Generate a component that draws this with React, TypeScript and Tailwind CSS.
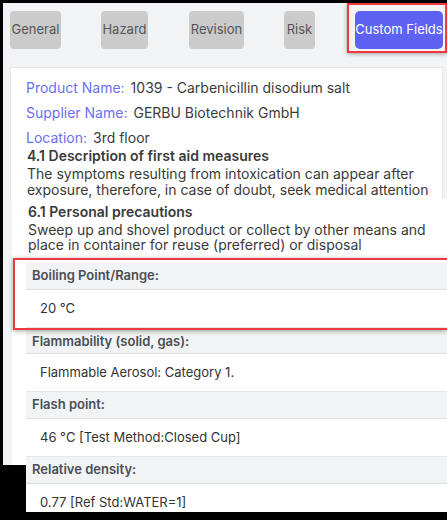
import React from "react";

const Tab = ({ label, className = "" }: { label: string; className?: string }) => (
  <div
    className={`h-[38px] rounded-[4px] bg-[#cbcbcb] flex items-center justify-center text-[13px] text-[#555] ${className}`}
  >
    {label}
  </div>
);

const HeaderRow = ({ label, h = "h-[27px]" }: { label: string; h?: string }) => (
  <div className={`${h} bg-[#f1f3f5] border-b border-[#dcdfe2] flex items-center pl-[6px] text-[13px] font-semibold text-[#4a4f55]`}>
    {label}
  </div>
);

const ValueRow = ({ value, h = "h-[38px]" }: { value: string; h?: string }) => (
  <div className={`${h} bg-white border-b border-[#e4e6e8] flex items-center pl-[14px] text-[13px] text-[#333]`}>
    {value}
  </div>
);

export default function App() {
  return (
    <div className="w-[447px] h-[520px] bg-black overflow-hidden pt-[3px] pl-[3px] font-['Inter',sans-serif]">
      <div className="bg-[#f1f3f5]">
        {/* Tabs */}
        <div className="flex items-start h-[64px]">
          <Tab label="General" className="mt-[8px] ml-[7px] w-[51px]" />
          <Tab label="Hazard" className="mt-[8px] ml-[40px] w-[47px]" />
          <Tab label="Revision" className="mt-[8px] ml-[41px] w-[55px]" />
          <Tab label="Risk" className="mt-[8px] ml-[40px] w-[31px]" />
          <div className="ml-[32px] border-2 border-[#ee3a3f] pt-[6px] pl-[6px] pr-[2px] pb-[2px] shadow-[0_1px_4px_rgba(0,0,0,0.35)]">
            <div className="h-[38px] w-[88px] rounded-[5px] bg-[#5d62f5] flex items-center justify-center text-[13px] text-white">
              Custom Fields
            </div>
          </div>
        </div>

        {/* Card */}
        <div className="ml-[7px] mr-[4px] bg-white border border-b-0 border-[#e3e5e8] pl-[15px] pt-[10px] pb-[1px]">
          <div className="flex flex-col gap-[5px] text-[14px] leading-[20px]">
            <div className="flex gap-[6px]">
              <span className="text-[#6b6ff2]">Product Name:</span>
              <span className="text-[#3c3c3c]">1039 - Carbenicillin disodium salt</span>
            </div>
            <div className="flex gap-[6px]">
              <span className="text-[#6b6ff2]">Supplier Name:</span>
              <span className="text-[#3c3c3c]">GERBU Biotechnik GmbH</span>
            </div>
            <div className="flex gap-[6px]">
              <span className="text-[#6b6ff2]">Location:</span>
              <span className="text-[#3c3c3c]">3rd floor</span>
            </div>
          </div>
          <div className="pl-[1px] text-[14px] text-[#3a3a3a]">
            <div className="font-semibold leading-[18px] mt-[-1px]">4.1 Description of first aid measures</div>
            <div className="leading-[16px] mt-[1px]">
              The symptoms resulting from intoxication can appear after exposure, therefore, in case of doubt, seek medical attention
            </div>
          </div>
        </div>

        {/* 6.1 block */}
        <div className="ml-[9px] bg-white pl-[16px] pt-[4px] pb-[6px] text-[14px] text-[#3a3a3a]">
          <div className="font-semibold leading-[18px]">6.1 Personal precautions</div>
          <div className="leading-[15px] mt-[1px] pr-[4px]">
            Sweep up and shovel product or collect by other means and place in container for reuse (preferred) or disposal
          </div>
        </div>

        {/* Highlighted row */}
        <div className="ml-[10px] border-2 border-r-0 border-[#ee3a3f] bg-white pl-[11px] pt-[3px] shadow-[0_1px_5px_rgba(0,0,0,0.35)] relative">
          <HeaderRow label="Boiling Point/Range:" />
          <ValueRow value="20 °C" />
        </div>
      </div>

      {/* Lower table */}
      <div className="flex items-start">
        <div className="flex h-[135px]">
          <div className="w-[9px] bg-[#f1f3f5]" />
          <div className="w-[14px] bg-white" />
        </div>
        <div className="flex-1">
          <HeaderRow label="Flammability (solid, gas):" h="h-[24px]" />
          <ValueRow value="Flammable Aerosol: Category 1." h="h-[38px]" />
          <HeaderRow label="Flash point:" />
          <ValueRow value="46 °C [Test Method:Closed Cup]" />
          <HeaderRow label="Relative density:" />
          <div className="h-[28px] bg-white pl-[14px] pt-[9px] text-[13px] leading-[18px] text-[#333]">
            0.77 [Ref Std:WATER=1]
          </div>
        </div>
      </div>
    </div>
  );
}
